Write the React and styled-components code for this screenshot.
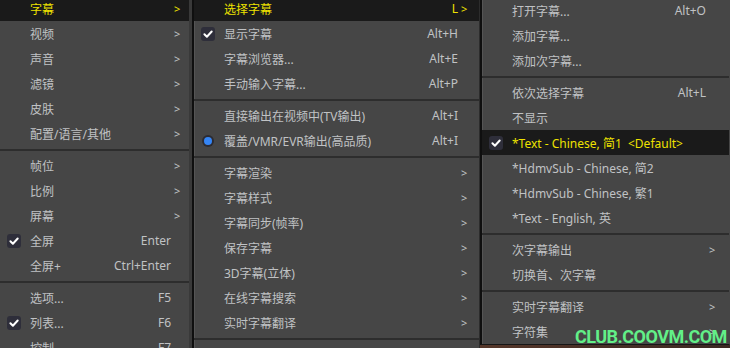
import React from 'react'
import styled, { createGlobalStyle } from 'styled-components'

const GlobalStyle = createGlobalStyle`
  html, body {
    margin: 0;
    padding: 0;
    background: #3b2a23;
  }
  body {
    font-family: "Noto Sans", "Noto Sans CJK SC", sans-serif;
  }
`

const Screen = styled.div`
  position: relative;
  display: flex;
  align-items: flex-start;
  width: 730px;
  height: 348px;
  overflow: hidden;
  background: linear-gradient(90deg, #2a1e1a, #5a3a2c 60%, #3b2822);
`

const Menu = styled.div`
  --tail: ${p => p.$tail}px;
  flex: ${p => (p.$grow ? '1' : 'none')};
  width: ${p => (p.$width ? `${p.$width}px` : 'auto')};
  margin-top: ${p => p.$top}px;
  padding-bottom: ${p => p.$bottom || 0}px;
  background: #464646;
  border-left: ${p => (p.$edge ? '2px solid #0f0f0f' : 'none')};
  border-right: 1px solid ${p => p.$rim || '#2c2c2c'};
  border-bottom: ${p => (p.$closed ? '1px solid #161616' : 'none')};
  box-shadow: ${p => (p.$edge ? 'inset 1px 0 0 #555' : 'none')};
`

const FirstMenu = styled(Menu)`
  border-right: 3px solid #393939;
`

const Row = styled.div`
  display: grid;
  grid-template-columns: 30px 1fr auto var(--tail);
  align-items: center;
  height: 25px;
  font-size: 12px;
  white-space: pre;
  background: ${p => (p.$active ? '#1a1a1a' : 'transparent')};
  color: ${p => (p.$active ? '#eee200' : '#c0c2c4')};
`

const Mark = styled.span`
  display: flex;
  align-items: center;
  padding-left: 7px;
`

const Label = styled.span`
  overflow: hidden;
`

const Keys = styled.span`
  text-align: right;
`

const Arrow = styled.span`
  padding-left: 3px;
  font-size: 11px;
`

const Separator = styled.div`
  height: 2px;
  margin: 3px 0 2px;
  background: #2d2d2d;
`

const CheckBox = styled.span`
  display: flex;
  width: 14px;
  height: 14px;
  border-radius: 3px;
  background: #2e2e3a;
`

const Radio = styled.span`
  display: flex;
  align-items: center;
  justify-content: center;
  width: 12px;
  height: 12px;
  margin-left: 1px;
  border-radius: 50%;
  background: #2b2b33;

  &::after {
    content: '';
    width: 8px;
    height: 8px;
    border-radius: 50%;
    background: #3585f5;
  }
`

const Watermark = styled.div`
  position: absolute;
  left: 575px;
  top: 328px;
  font-family: Roboto, "Liberation Sans", sans-serif;
  font-weight: 700;
  font-size: 18px;
  line-height: 18px;
  color: #62f088;
  letter-spacing: -0.5px;
`

const Check = () => (
  <CheckBox>
    <svg width="14" height="14" viewBox="0 0 14 14">
      <path d="M3.4 7.2 L5.9 9.7 L10.7 4.5" fill="none" stroke="#fff" strokeWidth="2" strokeLinecap="round" strokeLinejoin="round" />
    </svg>
  </CheckBox>
)

const SEP = { sep: true }

const mainMenu = [
  { label: '字幕', sub: true, active: true },
  { label: '视频', sub: true },
  { label: '声音', sub: true },
  { label: '滤镜', sub: true },
  { label: '皮肤', sub: true },
  { label: '配置/语言/其他', sub: true },
  SEP,
  { label: '帧位', sub: true },
  { label: '比例', sub: true },
  { label: '屏幕', sub: true },
  { label: '全屏', keys: 'Enter', mark: 'check' },
  { label: '全屏+', keys: 'Ctrl+Enter' },
  SEP,
  { label: '选项...', keys: 'F5' },
  { label: '列表...', keys: 'F6', mark: 'check' },
  { label: '控制', keys: 'F7' },
]

const subtitleMenu = [
  { label: '选择字幕', keys: 'L', sub: true, active: true },
  { label: '显示字幕', keys: 'Alt+H', mark: 'check' },
  { label: '字幕浏览器...', keys: 'Alt+E' },
  { label: '手动输入字幕...', keys: 'Alt+P' },
  SEP,
  { label: '直接输出在视频中(TV输出)', keys: 'Alt+I' },
  { label: '覆盖/VMR/EVR输出(高品质)', keys: 'Alt+I', mark: 'radio' },
  SEP,
  { label: '字幕渲染', sub: true },
  { label: '字幕样式', sub: true },
  { label: '字幕同步(帧率)', sub: true },
  { label: '保存字幕', sub: true },
  { label: '3D字幕(立体)', sub: true },
  { label: '在线字幕搜索', sub: true },
  { label: '实时字幕翻译', sub: true },
  SEP,
]

const trackMenu = [
  { label: '打开字幕...', keys: 'Alt+O' },
  { label: '添加字幕...' },
  { label: '添加次字幕...' },
  SEP,
  { label: '依次选择字幕', keys: 'Alt+L' },
  { label: '不显示' },
  { label: '*Text - Chinese, 简1  <Default>', mark: 'check', active: true },
  { label: '*HdmvSub - Chinese, 简2' },
  { label: '*HdmvSub - Chinese, 繁1' },
  { label: '*Text - English, 英' },
  SEP,
  { label: '次字幕输出', sub: true },
  { label: '切换首、次字幕' },
  SEP,
  { label: '实时字幕翻译', sub: true },
  { label: '字符集', sub: true },
]

const Items = ({ items }) =>
  items.map((it, i) =>
    it.sep ? (
      <Separator key={i} />
    ) : (
      <Row key={i} $active={it.active}>
        <Mark>
          {it.mark === 'check' && <Check />}
          {it.mark === 'radio' && <Radio />}
        </Mark>
        <Label>{it.label}</Label>
        <Keys>{it.keys || ''}</Keys>
        <Arrow>{it.sub ? '>' : ''}</Arrow>
      </Row>
    )
  )

export default function App() {
  return (
    <>
      <GlobalStyle />
      <Screen>
        <FirstMenu $width={189} $top={-4} $tail={18}>
          <Items items={mainMenu} />
        </FirstMenu>
        <Menu $width={285} $top={-4} $tail={21} $edge $bottom={20}>
          <Items items={subtitleMenu} />
        </Menu>
        <Menu $grow $top={-2} $tail={23} $edge $closed $rim="#464646">
          <Items items={trackMenu} />
        </Menu>
        <Watermark>CLUB.COOVM.COM</Watermark>
      </Screen>
    </>
  )
}
